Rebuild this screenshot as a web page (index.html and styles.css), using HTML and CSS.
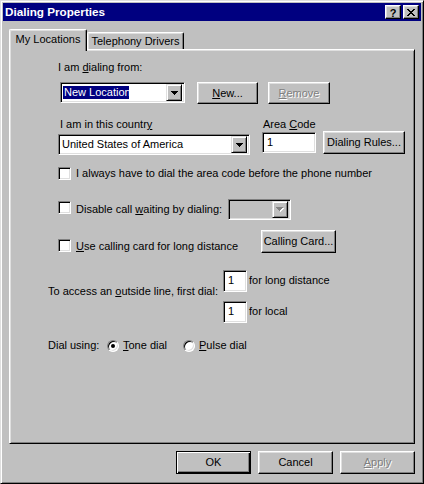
FILE: index.html
```html
<!DOCTYPE html>
<html>
<head>
<meta charset="utf-8">
<link rel="stylesheet" href="styles.css">
</head>
<body>
<div class="window">
  <div class="titlebar">
    <span class="title">Dialing Properties</span>
    <div class="tbtns">
      <div class="tbtn help">?</div>
      <div class="tbtn">
        <svg width="8" height="7" viewBox="0 0 8 7" shape-rendering="crispEdges"><path fill="#000" d="M0 0h2v1H0z M6 0h2v1H6z M1 1h2v1H1z M5 1h2v1H5z M2 2h4v1H2z M3 3h2v1H3z M2 4h4v1H2z M1 5h2v1H1z M5 5h2v1H5z M0 6h2v1H0z M6 6h2v1H6z"/></svg>
      </div>
    </div>
  </div>
  <div class="content">
    <div class="tabs">
      <div class="tab active">My Locations</div>
      <div class="tab">Telephony Drivers</div>
    </div>
    <div class="panel">
      <div class="row row-a"><span>I am <u>d</u>ialing from:</span></div>
      <div class="row row-b">
        <div class="combo loc"><span class="sel">New Location</span>
          <div class="ddbtn"><svg width="7" height="4" viewBox="0 0 7 4" shape-rendering="crispEdges"><path d="M0 0h7v1H0z M1 1h5v1H1z M2 2h3v1H2z M3 3h1v1H3z"/></svg></div>
        </div>
        <div class="btn new"><span><u>N</u>ew...</span></div>
        <div class="btn remove disabled"><span><u>R</u>emove</span></div>
      </div>
      <div class="row row-c">
        <span class="lbl-country">I am in this countr<u>y</u></span>
        <span>Area <u>C</u>ode</span>
      </div>
      <div class="row row-d">
        <div class="combo country"><span class="val">United States of America</span>
          <div class="ddbtn"><svg width="7" height="4" viewBox="0 0 7 4" shape-rendering="crispEdges"><path d="M0 0h7v1H0z M1 1h5v1H1z M2 2h3v1H2z M3 3h1v1H3z"/></svg></div>
        </div>
        <div class="edit area">1</div>
        <div class="btn rules">Dialing Rules...</div>
      </div>
      <div class="row row-e">
        <div class="chk"></div>
        <span class="cl">I always have to dial the area code before the phone number</span>
      </div>
      <div class="row row-f">
        <div class="chk"></div>
        <span class="cl lbl-wait">Disable call <u>w</u>aiting by dialing:</span>
        <div class="combo waitc disabledc">
          <div class="ddbtn"><svg width="8" height="5" viewBox="0 0 8 5" shape-rendering="crispEdges"><path fill="#fff" d="M1 1h7v1H1z M2 2h5v1H2z M3 3h3v1H3z M4 4h1v1H4z"/><path fill="#808080" d="M0 0h7v1H0z M1 1h5v1H1z M2 2h3v1H2z M3 3h1v1H3z"/></svg></div>
        </div>
      </div>
      <div class="row row-g">
        <div class="chk"></div>
        <span class="cl lbl-card"><u>U</u>se calling card for long distance</span>
        <div class="btn card">Calling Card...</div>
      </div>
      <div class="row row-h">
        <span class="lbl-access">To access an <u>o</u>utside line, first dial:</span>
        <div class="dialcol">
          <div class="dialrow"><div class="edit small">1</div><span class="fortext">for long distance</span></div>
          <div class="dialrow"><div class="edit small">1</div><span class="fortext">for local</span></div>
        </div>
      </div>
      <div class="row row-i">
        <span class="lbl-using">Dial using:</span>
        <div class="opt tone"><div class="radio"><span class="dot"></span></div><span class="optl"><u>T</u>one dial</span></div>
        <div class="opt"><div class="radio"></div><span class="optl"><u>P</u>ulse dial</span></div>
      </div>
    </div>
    <div class="footer">
      <div class="btn big default">OK</div>
      <div class="btn big">Cancel</div>
      <div class="btn big disabled"><span><u>A</u>pply</span></div>
    </div>
  </div>
</div>
</body>
</html>
```

FILE: styles.css
```css
html, body {
  margin: 0;
  padding: 0;
  background: #c0c0c0;
}
body {
  font-family: "Liberation Sans", Arial, sans-serif;
  font-size: 11px;
  line-height: 13px;
  color: #000;
}
u { text-decoration: underline; text-underline-offset: 1px; }

.window {
  width: 424px;
  height: 484px;
  box-sizing: border-box;
  background: #c0c0c0;
  border: 1px solid;
  border-color: #dfdfdf #000 #000 #dfdfdf;
  box-shadow: inset 1px 1px #fff, inset -1px -1px #808080;
  padding: 2px;
  display: flex;
  flex-direction: column;
}

.titlebar {
  height: 18px;
  flex: none;
  background: #000080;
  color: #fff;
  display: flex;
  align-items: center;
  justify-content: space-between;
  padding: 0 2px;
}
.title {
  font-weight: bold;
  font-size: 11.7px;
  line-height: 18px;
}
.tbtns { display: flex; gap: 2px; }
.tbtn {
  width: 16px;
  height: 14px;
  box-sizing: border-box;
  background: #c0c0c0;
  border: 1px solid;
  border-color: #fff #000 #000 #fff;
  box-shadow: inset -1px -1px #808080, inset 1px 1px #dfdfdf;
  display: flex;
  align-items: center;
  justify-content: center;
  color: #000;
}
.tbtn svg { display: block; margin-top: 1px; }
.help {
  font-weight: bold;
  font-size: 11px;
  line-height: 12px;
  padding-top: 1px;
}

.content {
  flex: 1;
  display: flex;
  flex-direction: column;
  padding: 8px 6px 0 6px;
}

.tabs {
  display: flex;
  align-items: flex-end;
  height: 20px;
  flex: none;
}
.tab {
  box-sizing: border-box;
  background: #c0c0c0;
  border-top: 1px solid #fff;
  border-left: 1px solid #fff;
  border-right: 1px solid #000;
  box-shadow: inset -1px 0 #808080, inset 1px 1px #dfdfdf;
  border-radius: 2px 2px 0 0;
  text-align: center;
  width: 97px;
  height: 17px;
  padding-top: 2px;
}
.tab.active {
  width: 78px;
  height: 22px;
  margin-bottom: -2px;
  padding-top: 3px;
  position: relative;
  z-index: 1;
}

.panel {
  height: 395px;
  box-sizing: border-box;
  flex: none;
  border: 1px solid;
  border-color: #fff #000 #000 #fff;
  box-shadow: inset 1px 1px #dfdfdf, inset -1px -1px #808080;
  display: flex;
  flex-direction: column;
}

.row { display: flex; flex: none; }
.row-a { margin-top: 11px; height: 13px; padding-left: 48px; }
.row-b { margin-top: 8px; height: 22px; align-items: flex-start; }
.row-c { margin-top: 14px; height: 13px; }
.row-d { height: 24px; align-items: flex-start; }
.row-e { margin-top: 11px; height: 15px; align-items: center; }
.row-f { margin-top: 17px; height: 22px; align-items: center; }
.row-g { margin-top: 10px; height: 23px; align-items: flex-start; }
.row-h { margin-top: 17px; height: 54px; align-items: flex-start; }
.row-i { margin-top: 15px; height: 13px; align-items: center; }

/* sunken fields */
.combo, .edit {
  box-sizing: border-box;
  border: 1px solid;
  border-color: #808080 #fff #fff #808080;
  box-shadow: inset 1px 1px #000, inset -1px -1px #dfdfdf;
  background: #fff;
  display: flex;
  align-items: center;
}
.combo { padding: 2px; height: 21px; }
.ddbtn {
  margin-left: auto;
  width: 16px;
  height: 17px;
  box-sizing: border-box;
  background: #c0c0c0;
  border: 1px solid;
  border-color: #dfdfdf #000 #000 #dfdfdf;
  box-shadow: inset 1px 1px #fff, inset -1px -1px #808080;
  display: flex;
  align-items: center;
  justify-content: center;
}
.ddbtn svg { display: block; }
.sel {
  background: #000080;
  color: #fff;
  padding: 0 0 0 1px;
  width: 66px;
  box-sizing: border-box;
  white-space: nowrap;
  line-height: 13px;
}
.val { padding-left: 1px; white-space: nowrap; }

.loc { margin-left: 50px; width: 125px; }
.country { margin-left: 48px; margin-top: 3px; width: 192px; }
.edit { padding-left: 4px; }
.area { margin-left: 12px; margin-top: 1px; width: 54px; height: 21px; }
.waitc { width: 63px; margin-left: 0; }
.disabledc { background: #c0c0c0; }

/* buttons */
.btn {
  box-sizing: border-box;
  background: #c0c0c0;
  border: 1px solid;
  border-color: #fff #000 #000 #fff;
  box-shadow: inset -1px -1px #808080, inset 1px 1px #dfdfdf;
  display: flex;
  align-items: center;
  justify-content: center;
  white-space: nowrap;
}
.btn.disabled {
  color: #808080;
  text-shadow: 1px 1px #fff;
}
.new { margin-left: 12px; width: 61px; height: 22px; }
.remove { margin-left: 10px; width: 62px; height: 22px; }
.rules { margin-left: 7px; width: 82px; height: 23px; }
.card { margin-left: 0; width: 75px; height: 23px; }
.big { width: 75px; height: 23px; }
.btn.default {
  border: 1px solid #000;
  box-shadow: inset 1px 1px #fff, inset -1px -1px #000, inset -2px -2px #808080;
}

.lbl-country { margin-left: 50px; width: 203px; }

/* checkboxes */
.chk {
  flex: none;
  width: 13px;
  height: 13px;
  box-sizing: border-box;
  background: #fff;
  border: 1px solid;
  border-color: #808080 #fff #fff #808080;
  box-shadow: inset 1px 1px #000, inset -1px -1px #dfdfdf;
  margin-left: 48px;
}
.cl { margin-left: 5px; white-space: nowrap; }
.row-f .chk { margin-bottom: 3px; }
.lbl-wait { width: 152px; flex: none; }
.row-g .chk { margin-top: 9px; }
.lbl-card { margin-top: 10px; width: 185px; flex: none; }

/* outside line */
.lbl-access { margin-left: 38px; margin-top: 15px; width: 175px; flex: none; white-space: nowrap; }
.dialcol { display: flex; flex-direction: column; gap: 9px; }
.dialrow { display: flex; align-items: center; }
.edit.small { width: 24px; height: 22px; padding-left: 4px; align-items: flex-start; padding-top: 3px; }
.fortext { margin-left: 2px; margin-top: -2px; }

/* radios */
.lbl-using { margin-left: 38px; width: 59px; flex: none; }
.opt { display: flex; align-items: center; }
.opt.tone { width: 76px; }
.radio {
  width: 12px;
  height: 12px;
  box-sizing: border-box;
  border-radius: 50%;
  background: #fff;
  border: 1px solid;
  border-color: #808080 #fff #fff #808080;
  box-shadow: inset 1px 1px #000, inset -1px -1px #dfdfdf;
  display: flex;
  align-items: center;
  justify-content: center;
  flex: none;
}
.dot { width: 4px; height: 4px; border-radius: 50%; background: #000; }
.optl { margin-left: 4px; white-space: nowrap; }

.footer {
  display: flex;
  justify-content: flex-end;
  gap: 7px;
  margin-top: 7px;
}
```
